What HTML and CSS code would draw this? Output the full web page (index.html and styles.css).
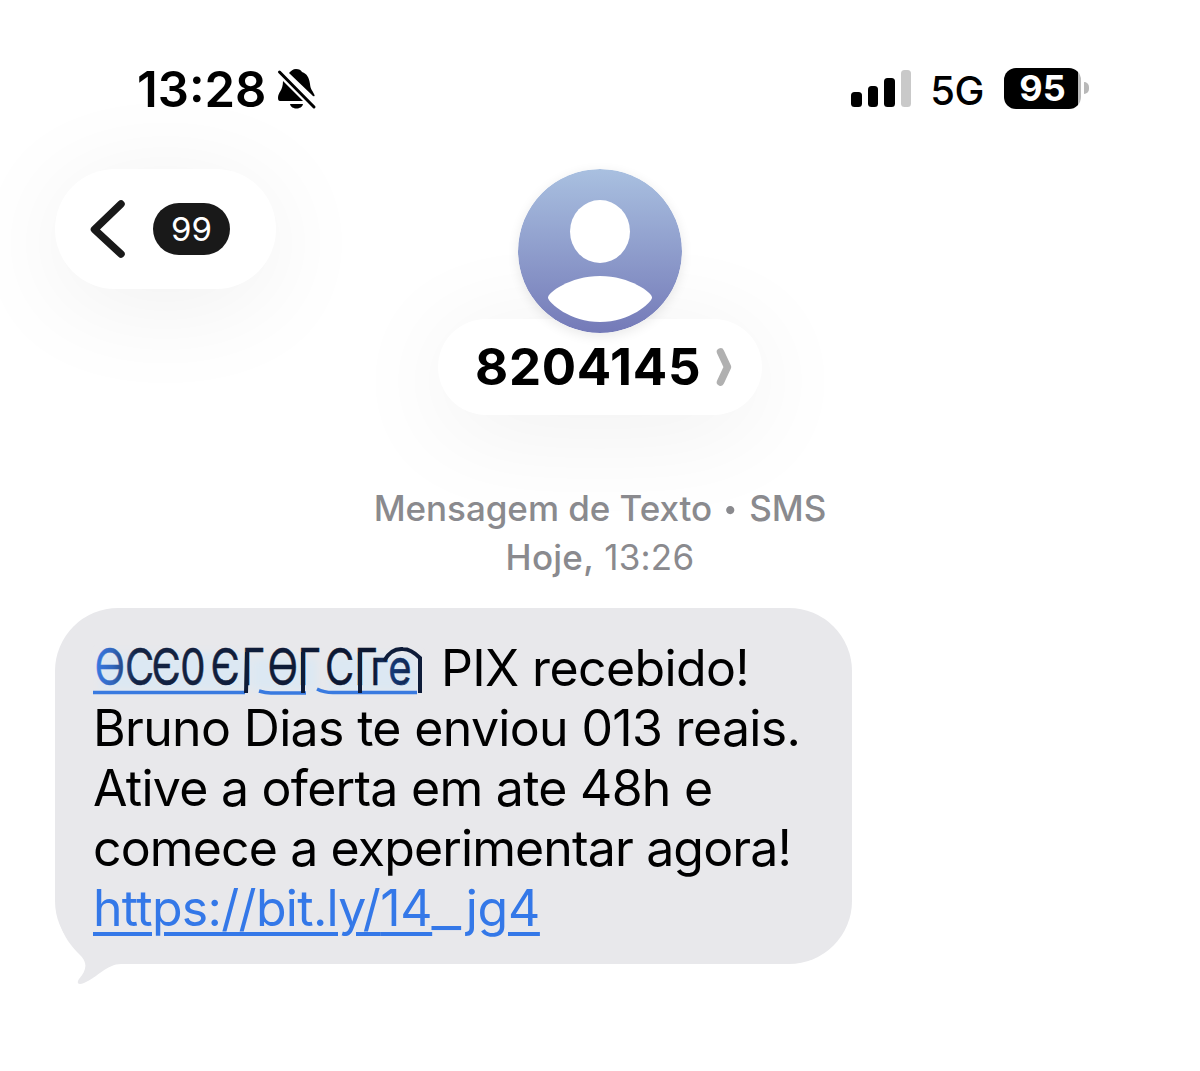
FILE: index.html
```html
<!DOCTYPE html>
<html lang="pt-BR">
<head>
<meta charset="utf-8">
<title>8204145</title>
<link rel="stylesheet" href="styles.css">
</head>
<body>
<header class="status">
  <div class="status-left">
    <span class="clock">13:28</span>
    <svg class="bell" width="42" height="44" viewBox="0 0 42 44">
      <path d="M20 2C17 2 15 4 13 6L37 29Q39 30 38.500 28C37 24 34.500 23 34 17C33 10 31 7 26 5C25 3 23 2 20 2ZM7 14C7 24 2 25 2 31Q2 34 4 34H27ZM14 37H27C26 43 15 43 14 37Z"/>
      <path d="M3.500 5L38 40" fill="none" stroke="#000" stroke-width="3" stroke-linecap="round"/>
    </svg>
  </div>
  <div class="status-right">
    <div class="signal"><i class="b1"></i><i class="b2"></i><i class="b3"></i><i class="b4"></i></div>
    <span class="network">5G</span>
    <div class="battery"><span>95</span></div><i class="battery-tip"></i>
  </div>
</header>
<nav class="nav">
  <div class="back">
    <svg width="36" height="60" viewBox="0 0 36 60"><path d="M31 5L4.500 30.500L31 55" fill="none" stroke="#191919" stroke-width="7.500" stroke-linecap="round" stroke-linejoin="round"/></svg>
    <span class="unread">99</span>
  </div>
  <div class="contact">
    <svg class="avatar" width="164" height="164" viewBox="0 0 164 164">
      <defs><linearGradient id="sky" x1="0" y1="0" x2="0" y2="1"><stop offset="0" stop-color="#a9c0e0"/><stop offset="1" stop-color="#747ab8"/></linearGradient></defs>
      <circle cx="82" cy="82" r="82" fill="url(#sky)"/>
      <ellipse cx="82" cy="62.500" rx="30" ry="31.500" fill="#fff"/>
      <path d="M30 129C29 124 52 107 82 107S135 124 134 129S112 153 82 153S31 134 30 129Z" fill="#fff"/>
    </svg>
    <div class="name"><span>8204145</span>
      <svg width="18" height="40" viewBox="0 0 18 40"><path d="M5.500 5L12.500 20L5.500 35" fill="none" stroke="#b0b0b0" stroke-width="7.500" stroke-linecap="round" stroke-linejoin="round"/></svg>
    </div>
  </div>
</nav>
<main>
  <div class="meta"><div class="m1">Mensagem de Texto <span class="dot">•</span> SMS</div><div class="m2"><b>Hoje,</b> 13:26</div></div>
  <div class="bubble">
    <div class="line l1">
      <svg class="sender" width="330" height="60" viewBox="0 0 330 60">
        <defs>
          <linearGradient id="ink" gradientUnits="userSpaceOnUse" x1="0" y1="0" x2="412" y2="0"><stop offset="0" stop-color="#397be8"/><stop offset=".06" stop-color="#3267bd"/><stop offset=".13" stop-color="#142444"/><stop offset=".85" stop-color="#0b1630"/><stop offset=".9" stop-color="#163c7c"/><stop offset="1" stop-color="#0c1730"/></linearGradient>
          <filter id="soft" x="-5%" y="-20%" width="110%" height="140%"><feGaussianBlur stdDeviation="4"/></filter>
        </defs>
        <g fill="#dce8f3" filter="url(#soft)"><rect x="8" y="15" width="146" height="37"/><rect x="158" y="20" width="66" height="32"/><rect x="236" y="18" width="88" height="35"/></g>
        <path d="M0 54.500H152M166 53Q174 55.500 180 55H213M224 51Q232 55 242 54.500H324" fill="none" stroke="#397ae0" stroke-width="3.500"/>
        <text class="word" transform="scale(.8 1)" x="2 40 73 109 147 186 218 256 290 327 347 369" y="46.500" fill="url(#ink)" stroke="url(#ink)">ӨСЄ0ЄГӨГСГге</text>
        <path d="M154 14L153 55M210 14V55M267 14V55M291 23Q298 10 310 11Q318 11 327 20V55" fill="none" stroke="#0e1c39" stroke-width="4"/>
      </svg><span class="pix">PIX recebido!</span>
    </div>
    <div class="line l2">Bruno Dias te enviou 013 reais.</div>
    <div class="line l3">Ative a oferta em ate 48h e</div>
    <div class="line l4">comece a experimentar agora!</div>
    <div class="line l5"><a><span class="host">https://bit.ly/</span>14<span class="under">_</span>jg4</a></div>
    <svg class="tail" width="70" height="64" viewBox="0 0 70 64"><path d="M4 0C8 17 18 28 24 34C34 43 31 51 24 59C21 64 24 65 29 63C43 57 52 44 66 44H70V0Z" fill="#e8e8eb"/></svg>
  </div>
</main>
</body>
</html>
```
FILE: styles.css
```css
* { box-sizing: border-box; }
body { margin: 0; width: 1200px; height: 1071px; background: #fff; font-family: Inter, "Liberation Sans", sans-serif; color: #000; overflow: hidden; }
svg { display: block; flex: none; }
.status { height: 169px; padding: 66px 111px 0 137px; display: flex; justify-content: space-between; align-items: flex-start; }
.status-left, .status-right { display: flex; align-items: center; height: 46px; }
.status-right { height: 44px; }
.clock { font-size: 49px; font-weight: 600; line-height: 46px; padding-top: 2px; }
.bell { margin-left: 10px; }
.signal { display: flex; align-items: flex-end; gap: 6px; height: 37px; margin-right: 19px; }
.signal i { width: 10.5px; border-radius: 3.5px; background: #000; }
.signal .b1 { height: 15px; }
.signal .b2 { height: 21px; }
.signal .b3 { height: 29px; }
.signal .b4 { height: 37px; background: #c9c9c9; }
.network { font-size: 40px; font-weight: 500; letter-spacing: -.5px; margin-right: 20px; padding-top: 4px; }
.battery { width: 77px; height: 41px; border-radius: 12px; background: linear-gradient(90deg, #000 74px, #b9b9b9 74px); color: #fff; font-size: 36px; font-weight: 700; line-height: 41px; text-align: center; }
.battery-tip { width: 5px; height: 12px; margin-left: 3px; border-radius: 0 6px 6px 0; background: #b9b9b9; }
.nav { display: grid; grid-template-columns: 383px 324px; padding-left: 55px; height: 315px; }
.back { width: 221px; height: 120px; border-radius: 60px; background: #fff; box-shadow: 0 14px 110px rgba(0,0,0,.065); display: flex; align-items: center; padding-left: 35px; gap: 27px; }
.unread { width: 77px; height: 52px; border-radius: 26px; background: #191919; color: #fff; font-size: 33px; line-height: 53px; text-align: center; }
.contact { display: flex; flex-direction: column; align-items: center; }
.avatar { position: relative; z-index: 1; border-radius: 50%; box-shadow: 0 3px 12px rgba(0,0,0,.09); }
.name { width: 324px; height: 96px; margin-top: -14px; border-radius: 48px; background: #fff; box-shadow: 0 14px 110px rgba(0,0,0,.065); display: flex; align-items: center; padding-left: 37px; gap: 14px; font-size: 51px; font-weight: 700; letter-spacing: .7px; }
.name span { margin-top: -2px; }
.meta { color: #8a8a8e; font-size: 35px; line-height: 49px; text-align: center; font-weight: 500; height: 119px; letter-spacing: -.05px; }
.dot { display: inline-block; transform: scale(.75); }
.m2 { font-weight: 400; letter-spacing: .25px; }
.m2 b { font-weight: 500; }
.bubble { position: relative; z-index: 0; width: 797px; height: 356px; margin: 5px 0 0 55px; border-radius: 63px; background: #e8e8eb; padding: 30px 38px; font-size: 50px; line-height: 60px; white-space: nowrap; }
.line { height: 60px; display: flex; }
.sender { overflow: visible; }
.word { font-size: 50px; stroke-width: .5px; }
.pix { margin-left: 18px; letter-spacing: -.62px; }
.l2 { letter-spacing: -.66px; }
.l3 { letter-spacing: -.73px; }
.l4 { letter-spacing: -.87px; }
.l5 { letter-spacing: -.3px; }
.l5 a { color: #3478e8; text-decoration: underline; text-decoration-thickness: 3.5px; text-underline-offset: 6px; }
.host { letter-spacing: -.7px; }
.under { display: inline-block; transform: scaleX(1.3); margin: 0 8px 0 3px; }
.tail { position: absolute; z-index: -1; left: 0; bottom: -20px; }
```
